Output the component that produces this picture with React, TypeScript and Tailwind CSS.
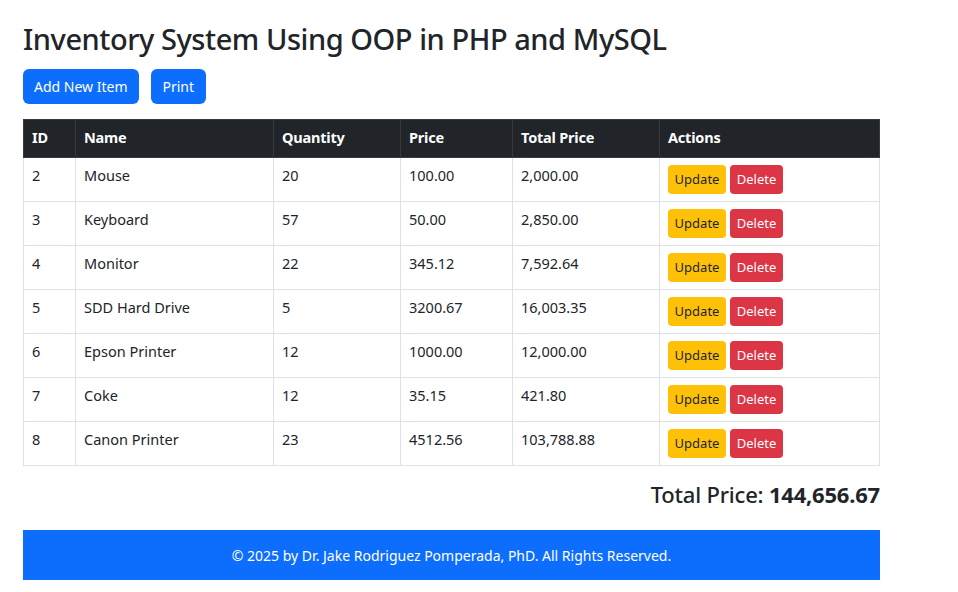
import React from "react";

const rows = [
  { id: 2, name: "Mouse", qty: 20, price: "100.00", total: "2,000.00" },
  { id: 3, name: "Keyboard", qty: 57, price: "50.00", total: "2,850.00" },
  { id: 4, name: "Monitor", qty: 22, price: "345.12", total: "7,592.64" },
  { id: 5, name: "SDD Hard Drive", qty: 5, price: "3200.67", total: "16,003.35" },
  { id: 6, name: "Epson Printer", qty: 12, price: "1000.00", total: "12,000.00" },
  { id: 7, name: "Coke", qty: 12, price: "35.15", total: "421.80" },
  { id: 8, name: "Canon Printer", qty: 23, price: "4512.56", total: "103,788.88" },
];

const td = "align-top px-[8px] pt-[5px] pb-[7px] leading-[24px] border border-[#dee2e6]";

export default function App() {
  return (
    <div
      className="min-h-[592px] bg-white text-[#212529]"
      style={{ fontFamily: '"Noto Sans", "Open Sans", sans-serif' }}
    >
      <div className="w-[857px] ml-[23px] pt-[21px] flex flex-col">
        <h2 className="text-[29px] leading-[35px] font-medium tracking-[-0.45px]">
          Inventory System Using OOP in PHP and MySQL
        </h2>
        <div className="flex gap-[12px] mt-[13px]">
          <button className="h-[35px] px-[11px] rounded-[6px] bg-[#0d6efd] text-white text-[14px]">
            Add New Item
          </button>
          <button className="h-[35px] px-[12px] rounded-[6px] bg-[#0d6efd] text-white text-[14px]">
            Print
          </button>
        </div>
        <table className="mt-[15px] w-full border-collapse text-[14.5px]">
          <colgroup>
            <col className="w-[52px]" />
            <col className="w-[198px]" />
            <col className="w-[127px]" />
            <col className="w-[112px]" />
            <col className="w-[147px]" />
            <col />
          </colgroup>
          <thead>
            <tr className="bg-[#212529] text-white">
              {["ID", "Name", "Quantity", "Price", "Total Price", "Actions"].map((h) => (
                <th
                  key={h}
                  className="text-left font-bold px-[8px] pt-[5px] pb-[8px] leading-[24px] border border-[#373b3e] tracking-[-0.2px]"
                >
                  {h}
                </th>
              ))}
            </tr>
          </thead>
          <tbody>
            {rows.map((r) => (
              <tr key={r.id}>
                <td className={td}>{r.id}</td>
                <td className={td}>{r.name}</td>
                <td className={td}>{r.qty}</td>
                <td className={td}>{r.price}</td>
                <td className={td}>{r.total}</td>
                <td className="align-top px-[8px] py-[7px] border border-[#dee2e6]">
                  <div className="flex gap-[4px]">
                    <button className="h-[29px] w-[58px] rounded-[4px] bg-[#ffc107] text-[#212529] text-[13px]">
                      Update
                    </button>
                    <button className="h-[29px] w-[53px] rounded-[4px] bg-[#dc3545] text-white text-[13px]">
                      Delete
                    </button>
                  </div>
                </td>
              </tr>
            ))}
          </tbody>
        </table>
        <div className="mt-[14px] text-right text-[22px] leading-[28px] font-medium tracking-[-0.2px]">
          Total Price: <span className="font-bold">144,656.67</span>
        </div>
        <div className="mt-[22px] h-[50px] bg-[#0d6efd] text-white flex items-center justify-center text-[14px]">
          © 2025 by Dr. Jake Rodriguez Pomperada, PhD. All Rights Reserved.
        </div>
      </div>
    </div>
  );
}
